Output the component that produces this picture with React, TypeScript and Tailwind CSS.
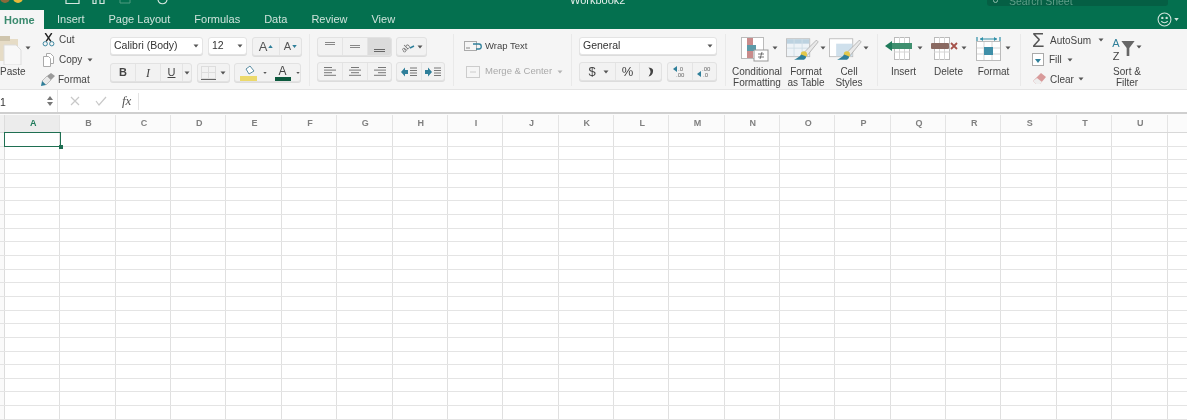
const tabs = ["Insert", "Page Layout", "Formulas", "Data", "Review", "View"]
const cols = "ABCDEFGHIJKLMNOPQRSTU".split("")
const rows = Array.from({ length: 22 }, (_, i) => i)

const Caret = ({ className = "" }: { className?: string }) => (
  <svg width="6" height="4" viewBox="0 0 6 4" className={className}>
    <path d="M0.5 0.5h5L3 3.5z" fill="#555" />
  </svg>
)

const Sep = () => <div className="w-px h-[52px] mt-[5px] bg-[#e9e9e9] shrink-0" />

const Group = ({ w, children }: { w: string; children: React.ReactNode }) => (
  <div className={`${w} h-[19px] flex items-center rounded-[3px] border border-[#e2e2e2] bg-[#f2f2f2] shadow-[0_1px_0_#dcdcdc] overflow-hidden shrink-0`}>
    {children}
  </div>
)

const Cell = ({ className = "", children }: { className?: string; children?: React.ReactNode }) => (
  <div className={`h-full flex items-center justify-center border-r border-[#e4e4e4] last:border-r-0 ${className}`}>{children}</div>
)

const Combo = ({ w, label }: { w: string; label: string }) => (
  <div className={`${w} h-[18px] flex items-center justify-between px-[3px] bg-white rounded-[3px] border border-[#e4e4e4] shadow-[0_1px_0_#dcdcdc] text-[10.5px] text-[#333] shrink-0`}>
    <span>{label}</span>
    <Caret />
  </div>
)

const Lines = ({ kind }: { kind: "left" | "center" | "right" }) => {
  const x = kind === "left" ? [0, 0, 0, 0] : kind === "center" ? [2, 0, 2, 0] : [4, 0, 4, 0]
  const w = [8, 12, 8, 12]
  return (
    <svg width="12" height="9" viewBox="0 0 12 9">
      {w.map((v, i) => (
        <rect key={i} x={x[i]} y={i * 2.6} width={v} height="1" fill="#777" />
      ))}
    </svg>
  )
}

const Indent = ({ flip }: { flip?: boolean }) => (
  <svg width="16" height="10" viewBox="0 0 16 10">
    {flip ? <path d="M0 3h3V0.5L7 5 3 9.5V7H0z" fill="#2f7f9a" /> : <path d="M7 3H4V0.5L0 5l4 4.500V7h3z" fill="#2f7f9a" />}
    {[0, 2.5, 5, 7.5].map((y) => (
      <rect key={y} x="9" y={y + 0.5} width="7" height="1" fill="#777" />
    ))}
  </svg>
)

const Big = ({ w, icon, l1, l2 }: { w: string; icon: React.ReactNode; l1: string; l2?: string }) => (
  <div className={`${w} flex flex-col items-center shrink-0`}>
    <div className="h-[29px] flex items-start justify-center">{icon}</div>
    <div className="text-[10px] leading-[11px] text-center text-[#444] whitespace-nowrap">
      <div>{l1}</div>
      {l2 && <div>{l2}</div>}
    </div>
  </div>
)

const Brush = () => (
  <>
    <path d="M34 2 19 17l4 3L36 4z" fill="#e9e9e9" stroke="#999" strokeWidth=".7" />
    <circle cx="20" cy="18" r="3.500" fill="#e3c84a" />
    <path d="M17 18c-2 3-5 4-8 6h11c2-1 3-3 2-4z" fill="#2f7f9a" />
  </>
)

const App = () => {
  return (
    <div className="w-[1187px] h-[420px] overflow-hidden bg-white font-['Liberation_Sans',Arial,sans-serif] blur-[0.45px]">
      {/* title bar, cut off by the top of the window */}
      <div className="h-[29px] bg-[#04704f] flex flex-col">
        <div className="h-[10px] flex items-end relative overflow-hidden">
          <div className="absolute left-0 -top-[7px] flex gap-[3px]">
            <div className="size-[10px] rounded-full bg-[#8a6a3a]" />
            <div className="size-[10px] rounded-full bg-[#e8b93a]" />
          </div>
          <svg width="110" height="6" viewBox="0 0 110 6" className="absolute left-[64px] top-0">
            <path d="M2 0v3.500h13V0M29 0v3.500h3V0M36 0v3.500h4V0M94 0c1 5 8 5 9 0" fill="none" stroke="#d5e6df" strokeWidth="1.200" />
            <path d="M56 0v3h10V0" fill="none" stroke="#4f9a80" strokeWidth="1" />
          </svg>
          <div className="absolute left-[570px] -top-[6px] text-[11px] leading-[12px] text-[#e4efeb]">Workbook2</div>
          <div className="absolute left-[987px] -top-[6px] w-[181px] h-[12px] bg-[#055f44] rounded-[3px] flex items-center pl-[6px] gap-[11px]">
            <div className="size-[5px] rounded-full border border-[#8fbcab]" />
            <span className="text-[10.5px] leading-[12px] text-[#5f9e88] relative top-[1px]">Search Sheet</span>
          </div>
        </div>
        <div className="h-[19px] flex items-center">
          <div className="w-[44px] h-full bg-[#f5f5f5] pl-[4px] text-[11px] leading-[20px] font-bold text-[#3a8a6e] shrink-0">Home</div>
          <div className="flex gap-[24px] pl-[13px] text-[11px] text-[#cfe3db] font-medium">
            {tabs.map((t) => (
              <span key={t}>{t}</span>
            ))}
          </div>
          <div className="ml-auto mr-[8px] flex items-center gap-[2px]">
            <svg width="15" height="15" viewBox="0 0 14 14" fill="none" stroke="#cfe3db" strokeWidth="1">
              <circle cx="7" cy="7" r="6" />
              <circle cx="5" cy="5.500" r=".6" fill="#cfe3db" />
              <circle cx="9" cy="5.500" r=".6" fill="#cfe3db" />
              <path d="M4 8.500c1.500 2 4.500 2 6 0" />
            </svg>
            <svg width="5" height="3" viewBox="0 0 6 4">
              <path d="M0 0h6L3 4z" fill="#cfe3db" />
            </svg>
          </div>
        </div>
      </div>

      {/* ribbon */}
      <div className="h-[60px] bg-[#f5f5f5] flex text-[#444]">
        {/* clipboard */}
        <div className="w-[110px] flex shrink-0">
          <div className="w-[42px] pt-[6px] flex flex-col relative shrink-0">
            <svg width="24" height="30" viewBox="0 0 24 30" className="block">
              <path d="M0 4h18v22H0z" fill="#e6dcc6" />
              <path d="M0 1h10v5H0z" fill="#cfc5ad" />
              <path d="M4 10h12l5 5v15H4z" fill="#f8f8f8" stroke="#ddd" />
            </svg>
            <Caret className="absolute left-[25px] top-[17px]" />
            <span className="text-[10px] leading-[11px] mt-[1px]">Paste</span>
          </div>
          <div className="flex flex-col pt-[1px] text-[10px]">
            <div className="h-[20px] flex items-center gap-[4px]">
              <svg width="13" height="14" viewBox="0 0 13 15" fill="none">
                <path d="M3 0l6 9M10 0L4 9" stroke="#222" strokeWidth="1.500" />
                <circle cx="3" cy="11.500" r="2.300" stroke="#2f7f9a" />
                <circle cx="10" cy="11.500" r="2.300" stroke="#2f7f9a" />
              </svg>
              <span>Cut</span>
            </div>
            <div className="h-[20px] flex items-center gap-[4px]">
              <svg width="13" height="14" viewBox="0 0 13 14" fill="#fff" stroke="#aaa">
                <path d="M4.500.5h4l3 3v7h-7z" />
                <path d="M1.500 3.500h5l2 2v8h-7z" />
              </svg>
              <span>Copy</span>
              <Caret className="ml-[1px]" />
            </div>
            <div className="h-[20px] flex items-center gap-[3px] -ml-[1px]">
              <svg width="14" height="13" viewBox="0 0 14 13">
                <path d="M6 3l4-3 4 3-4 4z" fill="#9a9a9a" />
                <path d="M6 3 1 8l4 4 5-5z" fill="#e9e9e9" stroke="#999" strokeWidth=".6" />
                <path d="M1 8l4 4-5 1z" fill="#2f7f9a" />
              </svg>
              <span>Format</span>
            </div>
          </div>
        </div>

        {/* font */}
        <div className="w-[199px] pt-2 flex flex-col gap-[7px] shrink-0">
          <div className="flex gap-[5px]">
            <Combo w="w-[93px]" label="Calibri (Body)" />
            <Combo w="w-[39px]" label="12" />
            <Group w="w-[50px]">
              <Cell className="w-[27px] text-[13px] text-[#555] gap-[1px]">
                A
                <svg width="5" height="3" viewBox="0 0 6 4">
                  <path d="M0 4h6L3 0z" fill="#2f7f9a" />
                </svg>
              </Cell>
              <Cell className="flex-1 text-[11px] text-[#555] gap-[1px]">
                A
                <svg width="5" height="3" viewBox="0 0 6 4">
                  <path d="M0 0h6L3 4z" fill="#2f7f9a" />
                </svg>
              </Cell>
            </Group>
          </div>
          <div className="flex">
            <Group w="w-[82px]">
              <Cell className="w-[25px] font-bold text-[11px]">B</Cell>
              <Cell className="w-[25px] italic font-['Liberation_Serif',serif] text-[12px]">I</Cell>
              <Cell className="w-[22px] underline text-[11px]">U</Cell>
              <Cell className="flex-1">
                <Caret />
              </Cell>
            </Group>
            <div className="ml-[5px]">
              <Group w="w-[33px]">
                <div className="w-[21px] flex justify-center">
                  <svg width="15" height="14" viewBox="0 0 15 14">
                    <rect x=".5" y=".5" width="14" height="12" fill="none" stroke="#ddd" />
                    <path d="M7.500 0v13M0 6.500h15" stroke="#ddd" />
                    <path d="M0 13.500h15" stroke="#666" />
                  </svg>
                </div>
                <Caret className="ml-[1px]" />
              </Group>
            </div>
            <div className="ml-[4px]">
              <Group w="w-[67px]">
                <div className="w-[26px] flex justify-center shrink-0">
                  <svg width="17" height="16" viewBox="0 0 17 16">
                    <path d="M6 4l4-3 4 5-5 3z" fill="#fff" stroke="#5a8da3" />
                    <rect x="0" y="11" width="17" height="5" fill="#ecd96b" />
                  </svg>
                </div>
                <Caret className="ml-[2px]" />
                <div className="w-[27px] ml-[2px] flex flex-col items-center shrink-0">
                  <span className="text-[12px] leading-[12px] text-[#444]">A</span>
                  <div className="w-[16px] h-[4px] bg-[#0d5a3f]" />
                </div>
                <Caret />
              </Group>
            </div>
          </div>
        </div>
        <Sep />

        {/* alignment */}
        <div className="w-[143px] pl-[7px] pt-2 flex flex-col gap-[6px] shrink-0">
          <div className="flex gap-[4px]">
            <Group w="w-[75px]">
              <Cell className="w-[25px] items-start pt-[4px]">
                <div className="w-[10px] h-[3px] border-y border-[#888]" />
              </Cell>
              <Cell className="w-[25px]">
                <div className="w-[10px] h-[3px] border-y border-[#888]" />
              </Cell>
              <Cell className="flex-1 bg-[#dbdbdb] items-end pb-[3px]">
                <div className="w-[11px] h-[3px] border-y border-[#666]" />
              </Cell>
            </Group>
            <Group w="w-[31px]">
              <div className="flex items-center justify-center w-full gap-[2px]">
                <svg width="15" height="14" viewBox="0 0 15 14">
                  <text x="1" y="11" fontSize="8" fill="#666" transform="rotate(-45 5 8)">ab</text>
                  <path d="M10 8l4-2" stroke="#2f7f9a" strokeWidth="1.500" />
                </svg>
                <Caret />
              </div>
            </Group>
          </div>
          <div className="flex gap-[4px]">
            <Group w="w-[75px]">
              <Cell className="w-[25px]">
                <Lines kind="left" />
              </Cell>
              <Cell className="w-[25px]">
                <Lines kind="center" />
              </Cell>
              <Cell className="flex-1">
                <Lines kind="right" />
              </Cell>
            </Group>
            <Group w="w-[49px]">
              <Cell className="w-[25px]">
                <Indent />
              </Cell>
              <Cell className="flex-1">
                <Indent flip />
              </Cell>
            </Group>
          </div>
        </div>
        <Sep />

        {/* wrap and merge */}
        <div className="w-[117px] pl-[10px] pt-2 flex flex-col gap-[6px] text-[9.5px] shrink-0">
          <div className="h-[19px] flex items-center gap-[3px]">
            <svg width="18" height="11" viewBox="0 0 18 11" fill="none">
              <rect x=".5" y=".5" width="12" height="9" stroke="#aaa" />
              <path d="M2 7h4" stroke="#888" />
              <path d="M9 3h6c3 0 3 5 0 5h-3" stroke="#2f7f9a" strokeWidth="1.300" />
            </svg>
            <span>Wrap Text</span>
          </div>
          <div className="h-[19px] flex items-center gap-[5px] pl-[2px] text-[#aaa]">
            <svg width="14" height="12" viewBox="0 0 14 12" fill="none" stroke="#ccc">
              <rect x=".5" y=".5" width="13" height="11" />
              <path d="M4 6h6" />
            </svg>
            <span>Merge &amp; Center</span>
            <Caret className="opacity-40" />
          </div>
        </div>
        <Sep />

        {/* number */}
        <div className="w-[153px] pl-[7px] pt-2 flex flex-col gap-[7px] shrink-0">
          <Combo w="w-[138px]" label="General" />
          <div className="flex gap-[5px]">
            <Group w="w-[83px]">
              <Cell className="w-[36px] gap-[7px] text-[13px] pl-[2px]">
                $
                <Caret />
              </Cell>
              <Cell className="w-[24px] text-[13px]">%</Cell>
              <Cell className="flex-1">
                <svg width="6" height="10" viewBox="0 0 6 10">
                  <path d="M0.500 0.500c4 0.500 5 2 4.500 4.500S3 9 0.500 9.500C2 7 2.500 6 2.500 5S2 2 0.500 0.500z" fill="#444" />
                </svg>
              </Cell>
            </Group>
            <Group w="w-[50px]">
              <Cell className="w-[25px]">
                <svg width="15" height="11" viewBox="0 0 15 11">
                  <path d="M0 3l4-3v6z" fill="#2f7f9a" />
                  <text x="5" y="5" fontSize="6" fill="#666">.0</text>
                  <text x="3" y="11" fontSize="6" fill="#666">.00</text>
                </svg>
              </Cell>
              <Cell className="flex-1">
                <svg width="15" height="11" viewBox="0 0 15 11">
                  <text x="5" y="5" fontSize="6" fill="#666">.00</text>
                  <path d="M0 8l4-3v6z" fill="#2f7f9a" />
                  <text x="6" y="11" fontSize="6" fill="#666">.0</text>
                </svg>
              </Cell>
            </Group>
          </div>
        </div>
        <Sep />

        {/* styles */}
        <div className="w-[151px] pl-[6px] pt-2 flex gap-[6px] shrink-0">
          <Big
            w="w-[50px]"
            l1="Conditional"
            l2="Formatting"
            icon={
              <div className="flex items-start gap-[3px] ml-[4px]">
                <svg width="28" height="25" viewBox="0 0 28 25">
                  <rect x=".5" y=".5" width="22" height="21" fill="#fff" stroke="#bbb" />
                  <rect x="6" y="1" width="6" height="7" fill="#c98b8b" />
                  <rect x="6" y="8" width="9" height="6" fill="#5c9aa8" />
                  <rect x="6" y="14" width="6" height="7" fill="#c98b8b" />
                  <rect x="13" y="13" width="14" height="11" fill="#fff" stroke="#999" />
                  <path d="M17 17h6M17 20h6M21 15l-2 7" stroke="#555" strokeWidth=".8" />
                </svg>
                <Caret className="mt-[9px]" />
              </div>
            }
          />
          <Big
            w="w-[36px]"
            l1="Format"
            l2="as Table"
            icon={
              <div className="flex items-start">
                <svg width="34" height="25" viewBox="0 0 38 25">
                  <rect x=".5" y=".5" width="26" height="20" fill="#eef3f7" stroke="#bbb" />
                  <rect x="1" y="1" width="25" height="5" fill="#bcd2e0" />
                  <path d="M9 1v19M18 1v19M1 11h25" stroke="#cfdde6" />
                  <Brush />
                </svg>
                <Caret className="mt-[9px]" />
              </div>
            }
          />
          <Big
            w="w-[38px]"
            l1="Cell"
            l2="Styles"
            icon={
              <div className="flex items-start">
                <svg width="34" height="25" viewBox="0 0 38 25">
                  <rect x=".5" y=".5" width="26" height="20" fill="#fff" stroke="#bbb" />
                  <rect x="8" y="6" width="18" height="14" fill="#cfe0ec" />
                  <Brush />
                </svg>
                <Caret className="mt-[9px]" />
              </div>
            }
          />
        </div>
        <Sep />

        {/* cells */}
        <div className="w-[142px] pl-[3px] pt-2 flex shrink-0">
          <Big
            w="w-[45px]"
            l1="Insert"
            icon={
              <div className="flex items-start gap-[4px]">
                <svg width="28" height="24" viewBox="0 0 28 24">
                  <rect x="9.500" y=".5" width="15" height="22" fill="#fff" stroke="#bbb" />
                  <path d="M14.500 0v23M19.500 0v23M9 8h16M9 15h16" stroke="#d5d5d5" />
                  <rect x="6" y="6" width="21" height="6" fill="#3f8f6f" />
                  <path d="M0 9l7-5v10z" fill="#1f7a5a" />
                </svg>
                <Caret className="mt-[9px]" />
              </div>
            }
          />
          <Big
            w="w-[45px]"
            l1="Delete"
            icon={
              <div className="flex items-start gap-[2px]">
                <svg width="28" height="24" viewBox="0 0 28 24">
                  <rect x="3.500" y=".5" width="15" height="22" fill="#fff" stroke="#bbb" />
                  <path d="M8.500 0v23M13.500 0v23M3 8h16M3 15h16" stroke="#d5d5d5" />
                  <rect x="0" y="6" width="18" height="6" rx="1" fill="#8a6a62" />
                  <path d="M20 6l6 6M26 6l-6 6" stroke="#a5524a" strokeWidth="1.800" />
                </svg>
                <Caret className="mt-[9px]" />
              </div>
            }
          />
          <Big
            w="w-[45px]"
            l1="Format"
            icon={
              <div className="flex items-start gap-[4px]">
                <svg width="25" height="24" viewBox="0 0 25 24">
                  <path d="M1 0v4M24 0v4M4 2h17" stroke="#2f8fa8" strokeWidth="1.200" />
                  <path d="M4 2l3-2v4zM21 2l-3-2v4z" fill="#2f8fa8" />
                  <rect x=".5" y="4.500" width="24" height="19" fill="#fff" stroke="#bbb" />
                  <path d="M8 5v18M16 5v18M1 11h23M1 17h23" stroke="#d5d5d5" />
                  <rect x="8" y="10" width="9" height="8" fill="#3f8fa8" />
                </svg>
                <Caret className="mt-[9px]" />
              </div>
            }
          />
        </div>
        <Sep />

        {/* editing */}
        <div className="flex pl-[11px] shrink-0">
          <div className="w-[78px] pt-[1px] flex flex-col text-[10px] shrink-0">
            <div className="h-[20px] flex items-center gap-[4px]">
              <span className="w-[14px] text-[20px] leading-[20px] text-[#555]">Σ</span>
              <span>AutoSum</span>
              <Caret className="ml-[3px]" />
            </div>
            <div className="h-[20px] flex items-center gap-[5px]">
              <svg width="12" height="13" viewBox="0 0 12 13">
                <rect x=".5" y=".5" width="11" height="12" fill="#fff" stroke="#aaa" />
                <path d="M3 6h6L6 10z" fill="#2f7f9a" />
              </svg>
              <span>Fill</span>
              <Caret />
            </div>
            <div className="h-[20px] flex items-center gap-[4px]">
              <svg width="14" height="12" viewBox="0 0 14 12">
                <path d="M9 0l5 4-6 7H4L1 8z" fill="#d89a9a" />
                <path d="M1 8l3 3h4l2-2-5-4z" fill="#eee" />
              </svg>
              <span>Clear</span>
              <Caret />
            </div>
          </div>
          <div className="pt-2">
            <Big
              w="w-[34px]"
              l1="Sort &"
              l2="Filter"
              icon={
                <div className="flex items-start">
                  <div className="flex flex-col items-center text-[11px] leading-[13px]">
                    <span className="text-[#2f7f9a]">A</span>
                    <span>Z</span>
                  </div>
                  <svg width="16" height="15" viewBox="0 0 15 17" className="mt-[4px]">
                    <path d="M0 0h15L9 8v9H6V8z" fill="#666" />
                  </svg>
                  <Caret className="mt-[8px]" />
                </div>
              }
            />
          </div>
        </div>
      </div>

      {/* formula bar */}
      <div className="h-[25px] bg-white border-t border-[#e4e4e4] border-b-2 border-b-[#cfcfcf] flex items-center">
        <div className="w-[58px] h-full flex items-center justify-between pr-[4px] border-r border-[#e4e4e4] text-[10.5px] text-[#333] shrink-0">
          <span className="pt-[3px]">1</span>
          <div className="flex flex-col gap-[2px]">
            <svg width="6" height="4" viewBox="0 0 6 4">
              <path d="M0 4h6L3 0z" fill="#777" />
            </svg>
            <svg width="6" height="4" viewBox="0 0 6 4">
              <path d="M0 0h6L3 4z" fill="#777" />
            </svg>
          </div>
        </div>
        <div className="w-[81px] h-[17px] flex items-center pl-[12px] gap-[15px] border-r border-[#e4e4e4] shrink-0">
          <svg width="10" height="10" viewBox="0 0 10 10" fill="none" stroke="#c8c8c8" strokeWidth="1.200">
            <path d="M1 1l8 8M9 1l-8 8" />
          </svg>
          <svg width="12" height="10" viewBox="0 0 12 10" fill="none" stroke="#c8c8c8" strokeWidth="1.200">
            <path d="M1 5l3 4 7-8" />
          </svg>
          <span className="font-['Liberation_Serif',serif] italic text-[13px] text-[#555]">fx</span>
        </div>
      </div>

      {/* sheet */}
      <div className="relative">
        <div className="h-[19px] flex border-b border-[#d8d8d8] bg-[#fbfbfb] text-[9px] font-bold text-[#808080] pt-px">
          <div className="w-[5px] border-r border-[#dcdcdc] bg-[#f0f0f0] shrink-0" />
          {cols.map((c, i) => (
            <div
              key={c}
              className={`w-[55.37px] flex items-center justify-center pl-[2px] border-r border-[#e4e4e4] shrink-0 ${i === 0 ? "bg-[#ececec] text-[#1f7a5a]" : ""}`}
            >
              {c}
            </div>
          ))}
        </div>
        {rows.map((r) => (
          <div key={r} className="h-[13.67px] flex border-b border-[#e4e4e4]">
            <div className="w-[5px] border-r border-[#dcdcdc] bg-[#fafafa] shrink-0" />
            {cols.map((c) => (
              <div key={c} className="w-[55.37px] border-r border-[#e0e0e0] shrink-0" />
            ))}
          </div>
        ))}
        <div className="absolute left-[4px] top-[18px] w-[57px] h-[15px] border-[1.5px] border-[#1f6f52]" />
        <div className="absolute left-[59px] top-[31px] size-[4px] bg-[#1f6f52]" />
      </div>
    </div>
  )
}

export default App
